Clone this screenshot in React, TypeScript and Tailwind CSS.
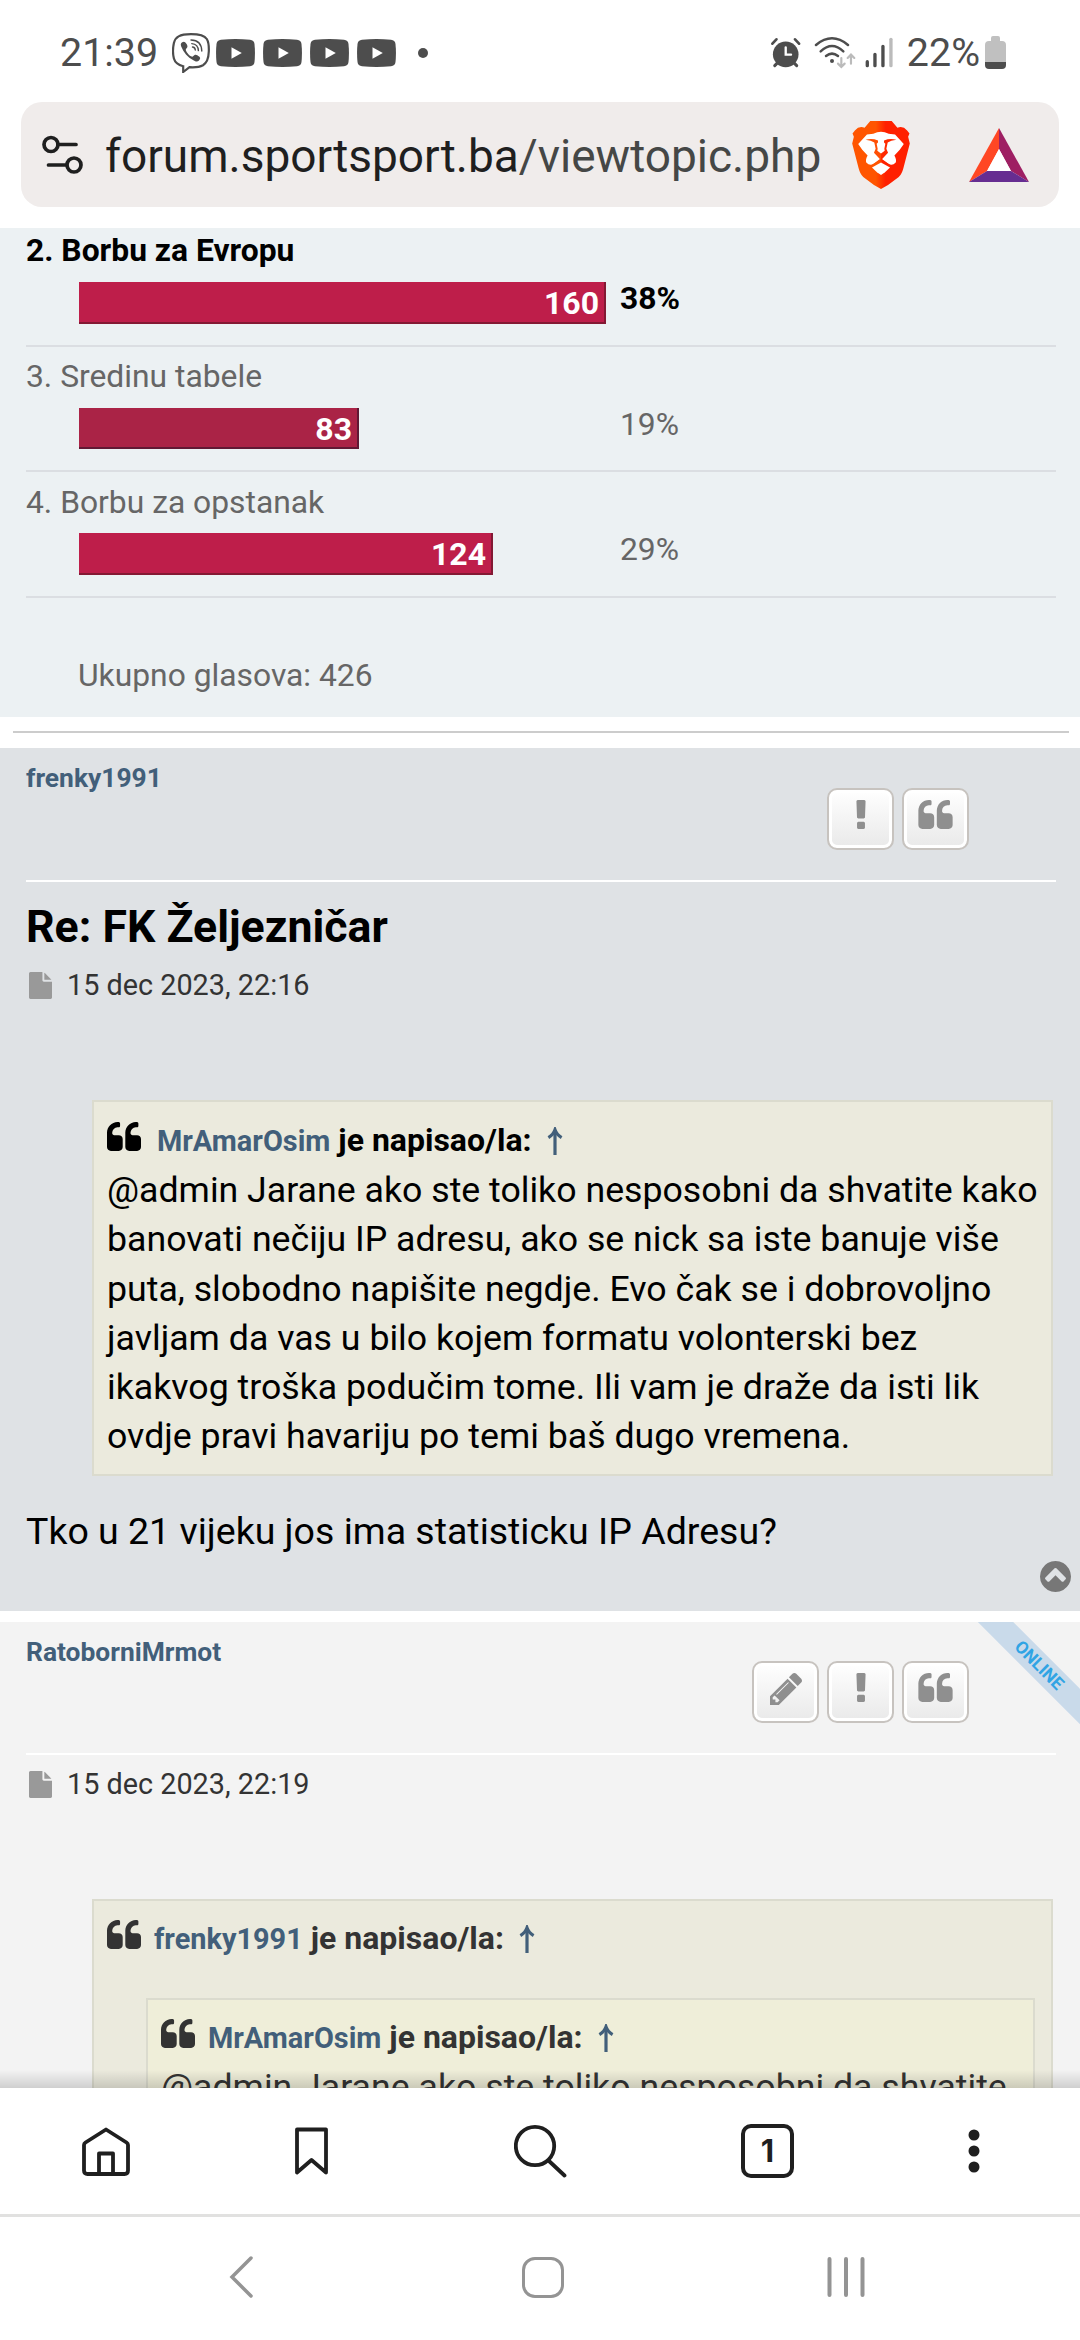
import React from "react";

type IconProps = { className?: string };

/* ---------- Font Awesome 4 glyphs used by the forum theme ---------- */

const QuoteIcon = ({ className }: IconProps) => (
  <svg viewBox="0 128 1664 1408" className={className} fill="currentColor">
    <path d="M768 960v384q0 80-56 136t-136 56h-384q-80 0-136-56t-56-136v-704q0-104 40.5-198.5t109.5-163.5 163.5-109.5 198.5-40.5h64q26 0 45 19t19 45v128q0 26-19 45t-45 19h-64q-106 0-181 75t-75 181v32q0 40 28 68t68 28h224q80 0 136 56t56 136zM1664 960v384q0 80-56 136t-136 56h-384q-80 0-136-56t-56-136v-704q0-104 40.5-198.5t109.5-163.5 163.5-109.5 198.5-40.5h64q26 0 45 19t19 45v128q0 26-19 45t-45 19h-64q-106 0-181 75t-75 181v32q0 40 28 68t68 28h224q80 0 136 56t56 136z" />
  </svg>
);

const ExclamationIcon = ({ className }: IconProps) => (
  <svg viewBox="673 128 446 1408" className={className} fill="currentColor">
    <path d="M1088 1248v224q0 26-19 45t-45 19h-256q-26 0-45-19t-19-45v-224q0-26 19-45t45-19h256q26 0 45 19t19 45zm30-1056l-28 768q-1 26-20.5 45t-45.500 19h-256q-26 0-45.500-19t-20.500-45l-28-768q-1-26 17.500-45t44.500-19h320q26 0 44.500 19t17.500 45z" />
  </svg>
);

const PencilIcon = ({ className }: IconProps) => (
  <svg viewBox="128 149 1515 1515" className={className} fill="currentColor">
    <path d="M491 1536l91-91-235-235-91 91v107h128v128h107zm523-928q0-22-22-22-10 0-17 7l-542 542q-7 7-7 17 0 22 22 22 10 0 17-7l542-542q7-7 7-17zm-54-192l416 416-832 832h-416v-416zm683 96q0 53-37 90l-166 166-416-416 166-165q36-38 90-38 53 0 91 38l235 234q37 39 37 91z" />
  </svg>
);

const FileIcon = ({ className }: IconProps) => (
  <svg viewBox="128 0 1536 1792" className={className} fill="currentColor">
    <path d="M1152 512v-472q22 14 36 28l408 408q14 14 28 36h-472zm-128 32q0 40 28 68t68 28h544v1056q0 40-28 68t-68 28h-1344q-40 0-68-28t-28-68v-1600q0-40 28-68t68-28h800v544z" />
  </svg>
);

const ChevronCircleUpIcon = ({ className }: IconProps) => (
  <svg viewBox="128 128 1536 1536" className={className} fill="currentColor">
    <path d="M1293 1139l102-102q19-19 19-45t-19-45l-454-454q-19-19-45-19t-45 19l-454 454q-19 19-19 45t19 45l102 102q19 19 45 19t45-19l307-307 307 307q19 19 45 19t45-19zm371-243q0 209-103 385.500t-279.500 279.500-385.500 103-385.500-103-279.500-279.500-103-385.500 103-385.500 279.500-279.500 385.500-103 385.500 103 279.500 279.500 103 385.500z" />
  </svg>
);

const ArrowUpIcon = ({ className }: IconProps) => (
  <svg viewBox="0 0 16 28" className={className} fill="none" stroke="currentColor">
    <path d="M8 3v25" strokeWidth="3.200" />
    <path d="M1.400 10.600C4.500 8.800 6.900 6 8 2.800 9.100 6 11.500 8.800 14.600 10.600" strokeWidth="3.200" />
  </svg>
);

/* ---------- Status bar ---------- */

const ViberIcon = () => (
  <svg viewBox="0 0 38 40" className="ml-[14px] h-[40px] w-[38px]" fill="none" stroke="#4d4d4d">
    <path
      d="M19 1.200C28 1.200 32.500 2.600 34.800 6 36.600 9 37 13.500 36.800 18.500 36.600 25 35.400 29.500 31 32.200 27.500 34.200 22 34.500 17.500 34.200L11.200 39V33.200C5.800 31.800 3 29.500 1.900 25.500 1 22 .9 14.500 1.900 10 3.200 4 7.500 1.200 19 1.200Z"
      strokeWidth="2.200"
    />
    <path
      d="M10.200 9.200C12 8 13.200 8.800 14.400 10.800 15.600 12.800 16 13.800 14.600 15.200 13.400 16.400 13.500 17.200 15 19.600 16.600 22 18 23 19.600 23.600 21 24 21.500 22.800 22.600 22 24 21.200 25.500 22.200 27.200 23.600 28.600 24.800 28.400 26 27 27.400 25.400 29 23.800 28.600 21.400 27.200 15.500 24 11.600 19.500 9.200 13.400 8.400 11.400 8.800 10.200 10.200 9.200Z"
      fill="#4d4d4d"
      stroke="none"
    />
    <path d="M19 7C25.500 7.200 29.600 11 29.800 18M19.800 10.600C24 11 26.200 13.600 26.400 17.600M20.500 14C22.400 14.200 23.200 15.200 23.300 17" strokeWidth="1.400" strokeLinecap="round" />
  </svg>
);

const YoutubeIcon = () => (
  <svg viewBox="0 0 39 28" className="h-[28px] w-[39px]">
    <path d="M5 .7Q19.500-.5 34 .7 38 1.200 38.500 5 39.400 14 38.500 23 38 26.800 34 27.300 19.500 28.500 5 27.300 1 26.800.5 23-.4 14 .5 5 1 1.200 5 .7Z" fill="#4d4d4d" />
    <path d="M15.500 8.200v11.600L25.800 14Z" fill="#fff" />
  </svg>
);

const StatusIcons = () => (
  <svg viewBox="30 24 366 100" className="h-[33.300px] w-[122px]" fill="none" strokeLinecap="round">
    <g stroke="#4d4d4d">
      <circle cx="74" cy="79" r="38.500" fill="#4d4d4d" stroke="none" />
      <path d="M34 47L46 34M114 47L102 34" strokeWidth="8" />
      <path d="M41 113L50 104M107 113L98 104" strokeWidth="9" />
      <path d="M74 58V80H90" stroke="#fff" strokeWidth="7" />
      <path d="M165 51Q213 11 261 51" strokeWidth="7.500" />
      <path d="M179 70Q213 38 247 70" strokeWidth="7.500" />
      <path d="M195 84Q213 70 231 84" strokeWidth="7.500" />
      <circle cx="213" cy="99" r="6" fill="#4d4d4d" stroke="none" />
      <path d="M319 101V113M342 79V113M366 55V113" strokeWidth="10" />
    </g>
    <g stroke="#bbbbbb">
      <path d="M390 34V113" strokeWidth="10" />
      <path d="M241 90V115M231 107L241 117 251 107M270 107V82M260 90L270 80 280 90" strokeWidth="6.500" />
    </g>
  </svg>
);

const Battery = () => (
  <svg viewBox="0 0 21 33" className="ml-[5px] h-[33px] w-[21px]">
    <path d="M6 2Q6 0 8 0H13Q15 0 15 2V5H17Q21 5 21 9V26H0V9Q0 5 4 5H6Z" fill="#c0c0c0" />
    <path d="M0 26H21V29Q21 33 17 33H4Q0 33 0 29Z" fill="#4d4d4d" />
  </svg>
);

const StatusBar = () => (
  <div className="flex h-[102px] items-center pt-[3px] pr-[74px] pl-[60px] text-[39.400px] text-[#4d4d4d]">
    <span>21:39</span>
    <ViberIcon />
    <div className="ml-[6px] flex gap-[8px]">
      <YoutubeIcon />
      <YoutubeIcon />
      <YoutubeIcon />
      <YoutubeIcon />
    </div>
    <span className="ml-[22px] size-[10px] rounded-full bg-[#4d4d4d]" />
    <div className="ml-auto flex items-center">
      <StatusIcons />
      <span className="ml-[14px]">22%</span>
      <Battery />
    </div>
  </div>
);

/* ---------- Address bar ---------- */

const TuneIcon = () => (
  <svg viewBox="0 0 41 40" className="h-[40px] w-[41px]" fill="none" stroke="#1f1f1f" strokeWidth="3.700" strokeLinecap="round">
    <circle cx="9" cy="9.500" r="7" />
    <path d="M16 9.500H34M6.500 30H24" />
    <circle cx="32" cy="30" r="7" />
  </svg>
);

const BraveIcon = () => (
  <svg viewBox="33 33 172 203" className="h-[68px] w-[58px]">
    <defs>
      <linearGradient id="mane" x1="0" x2="1" y1="0" y2="0">
        <stop offset="0" stopColor="#ff5500" />
        <stop offset=".41" stopColor="#ff5500" />
        <stop offset=".58" stopColor="#ff2000" />
        <stop offset="1" stopColor="#ff2000" />
      </linearGradient>
    </defs>
    <path
      d="M87 33H151L168 53Q184 46 197 61L204 70 200 80 205 100 186 173Q181 192 172 200L140 224 119 236 98 224 66 200Q57 192 52 173L33 100 38 80 34 70 41 61Q54 46 70 53Z"
      fill="url(#mane)"
    />
    <path
      d="M77 73L96 71Q108 65 119 65 130 65 142 71L161 73 187 102 175 119 159 136Q166 148 163 157 152 169 140 160L119 144 98 160Q86 169 75 157 72 148 79 136L63 119 51 102Z"
      fill="#fff"
    />
    <path d="M119 147L147 164V173H91V164Z" fill="url(#mane)" />
    <path d="M119 157L146 172 131 186 119 194 107 186 92 172Z" fill="#fff" />
    <g fill="#ff4010">
      <path d="M73 89Q92 84 110 91L110 97 106 101 109 116 108 122 119 130V150L98 128 103 116 99 97 88 92Z" fill="#ff4f05" />
      <path d="M165 89Q146 84 128 91L128 97 132 101 129 116 130 122 119 130V150L140 128 135 116 139 97 150 92Z" fill="#ff2a00" />
    </g>
  </svg>
);

const BatIcon = () => (
  <svg viewBox="0 0 60 54" className="h-[54px] w-[60px]">
    <path d="M30 0L0 54 18 43 30 21Z" fill="#ff4724" />
    <path d="M30 0L60 54 42 43 30 21Z" fill="#9e1f63" />
    <path d="M0 54H60L42 43H18Z" fill="#662d91" />
    <path d="M30 21L42 43H18Z" fill="#fff" />
  </svg>
);

const AddressBar = () => (
  <div className="mx-[21px] flex h-[105px] items-center rounded-[21px] bg-[#f0eceb] pr-[30px] pl-[21px]">
    <TuneIcon />
    <span className="ml-[22px] pt-[3px] text-[46px] leading-[56px] text-[#454746]">
      <span className="text-[#1f1f1f]">forum.sportsport.ba</span>/viewtopic.php
    </span>
    <div className="ml-auto flex items-center gap-[59px]">
      <BraveIcon />
      <BatIcon />
    </div>
  </div>
);

/* ---------- Poll ---------- */

const POLL = [
  { label: "2. Borbu za Evropu", votes: 160, percent: "38%", row: "font-bold text-black", gap: "mt-[10px]", bar: "w-[527px] h-[42px] bg-[#be1e4a] border-[#831933]" },
  { label: "3. Sredinu tabele", votes: 83, percent: "19%", row: "pt-[7px] text-[#666666]", gap: "mt-[10px]", bar: "w-[280px] h-[41px] bg-[#aa2346] border-[#611834]" },
  { label: "4. Borbu za opstanak", votes: 124, percent: "29%", row: "pt-[8px] text-[#666666]", gap: "mt-[9px]", bar: "w-[414px] h-[42px] bg-[#be1e4a] border-[#831933]" },
];

const Poll = () => (
  <section className="h-[489px] bg-[#ecf1f3] pr-[24px] pl-[26px] text-[31.800px] text-[#666666]">
    {POLL.map((o) => (
      <div key={o.votes} className={`border-b-2 border-[#dbdee2] pb-[21px] ${o.row}`}>
        <div className="leading-[44px]">{o.label}</div>
        <div className={`flex items-start pl-[53px] ${o.gap}`}>
          <div className="w-[541px]">
            <div className={`border-r-2 border-b-2 pr-[5px] text-right text-[32px] leading-[42px] font-bold text-white ${o.bar}`}>{o.votes}</div>
          </div>
          <span className="leading-[32px]">{o.percent}</span>
        </div>
      </div>
    ))}
    <div className="mt-[55px] pl-[52px] leading-[44px]">Ukupno glasova: 426</div>
  </section>
);

/* ---------- Posts ---------- */

const PostButton = ({ children }: { children: React.ReactNode }) => (
  <button className="flex h-[62px] w-[67px] justify-center rounded-[10px] border-2 border-[#c7c3bf] bg-gradient-to-b from-white to-[#e9e9e9] pt-[10px] text-[#8f8f8f] shadow-[inset_0_0_0_3px_#ffffff]">
    {children}
  </button>
);

const PostHeader = ({ name, editable, height }: { name: string; editable?: boolean; height: string }) => (
  <header className={`mr-[24px] ml-[26px] flex items-end justify-between border-b-2 border-white pr-[87px] pb-[30px] ${height}`}>
    <span className="self-start pt-[12px] text-[26.400px] leading-[36px] font-bold text-[#425f7a]">{name}</span>
    <div className="flex gap-[8px]">
      {editable && (
        <PostButton>
          <PencilIcon className="size-[32px]" />
        </PostButton>
      )}
      <PostButton>
        <ExclamationIcon className="h-[29px] w-[10px]" />
      </PostButton>
      <PostButton>
        <QuoteIcon className="h-[29px] w-[35px]" />
      </PostButton>
    </div>
  </header>
);

const PostDate = ({ children }: { children: React.ReactNode }) => (
  <div className="flex items-center gap-[15px] pl-[29px] text-[28.800px] leading-[36px] text-[#333333]">
    <FileIcon className="h-[27px] w-[23px] text-[#999999]" />
    <span>{children}</span>
  </div>
);

const Cite = ({ name, gap }: { name: string; gap: string }) => (
  <div className="flex h-[51px] items-center leading-[51px] font-bold">
    <QuoteIcon className={`mb-[8px] h-[29px] w-[34px] ${gap}`} />
    <div className="flex items-baseline gap-[8px]">
      <span className="text-[28.900px] text-[#425f7a]">{name}</span>
      <span className="text-[32px]">je napisao/la:</span>
    </div>
    <ArrowUpIcon className="ml-[15px] h-[28px] w-[16px] text-[#425f7a]" />
  </div>
);

const QUOTE_LINES = [
  "@admin Jarane ako ste toliko nesposobni da shvatite kako",
  "banovati nečiju IP adresu, ako se nick sa iste banuje više",
  "puta, slobodno napišite negdje. Evo čak se i dobrovoljno",
  "javljam da vas u bilo kojem formatu volonterski bez",
  "ikakvog troška podučim tome. Ili vam je draže da isti lik",
  "ovdje pravi havariju po temi baš dugo vremena.",
];

const FirstPost = () => (
  <article className="h-[863px] bg-[#dfe2e5] text-black">
    <PostHeader name="frenky1991" height="h-[134px]" />
    <h3 className="mt-[18px] pl-[26px] text-[44.670px] leading-[54px] font-bold">Re: FK Željezničar</h3>
    <div className="mt-[13px]">
      <PostDate>15 dec 2023, 22:16</PostDate>
    </div>
    <blockquote className="mt-[97px] mr-[27px] ml-[92px] border-2 border-[#dbdbce] bg-[#ebeadd] px-[13px] pt-[13px] pb-[12px]">
      <Cite name="MrAmarOsim" gap="mr-[16px]" />
      <div className="text-[35.700px] leading-[49.300px]">
        {QUOTE_LINES.map((line) => (
          <div key={line}>{line}</div>
        ))}
      </div>
    </blockquote>
    <p className="mt-[29px] pl-[26px] text-[37.500px] leading-[52px]">Tko u 21 vijeku jos ima statisticku IP Adresu?</p>
    <div className="mt-[4px] flex justify-end pr-[9px]">
      <ChevronCircleUpIcon className="size-[31px] text-[#777777]" />
    </div>
  </article>
);

const OnlineRibbon = () => (
  <div className="absolute top-0 right-0 size-[103px] overflow-hidden">
    <div className="absolute top-[31.400px] -left-[38px] w-[200px] rotate-45 bg-[#c9daea] text-center text-[17.500px] leading-[25px] font-bold text-[#30a4e4]">
      ONLINE
    </div>
  </div>
);

const SecondPost = () => (
  <article className="relative mt-[11px] bg-[#f3f3f3] text-[#333333]">
    <PostHeader name="RatoborniMrmot" height="h-[133px]" editable />
    <div className="mt-[11px]">
      <PostDate>15 dec 2023, 22:19</PostDate>
    </div>
    <blockquote className="mt-[97px] mr-[27px] ml-[92px] border-2 border-[#dbdbce] bg-[#ebeadd] px-[13px] pt-[12px] pb-[13px]">
      <Cite name="frenky1991" gap="mr-[13px]" />
      <blockquote className="mt-[34px] mr-[3px] ml-[39px] border-2 border-[#dbdbce] bg-[#efeed9] px-[13px] pt-[12px] pb-[13px]">
        <Cite name="MrAmarOsim" gap="mr-[13px]" />
        <div className="text-[35.700px] leading-[49.300px]">@admin Jarane ako ste toliko nesposobni da shvatite</div>
      </blockquote>
    </blockquote>
    <OnlineRibbon />
  </article>
);

/* ---------- Browser toolbar and system navigation ---------- */

const Toolbar = () => (
  <nav className="flex h-[129px] shrink-0 items-center border-b-[3px] border-[#e1e1e0] pl-[82px] text-[#1f1f1f]">
    <svg viewBox="0 0 48 49" className="h-[49px] w-[48px]" fill="none" stroke="currentColor" strokeWidth="3.800" strokeLinejoin="round">
      <path d="M24 2.500L44.500 15.500Q46 16.500 46 18V43.500Q46 47 42.500 47H5.500Q2 47 2 43.500V18Q2 16.500 3.500 15.500Z" />
      <path d="M17 47V26.500H31V47" />
    </svg>
    <svg viewBox="0 0 33 48" className="ml-[165px] h-[48px] w-[33px]" fill="none" stroke="currentColor" strokeWidth="3.800" strokeLinejoin="round">
      <path d="M2 2.500H31V45.500L16.500 33 2 45.500Z" />
    </svg>
    <svg viewBox="0 0 53 54" className="ml-[186px] h-[54px] w-[53px]" fill="none" stroke="currentColor" strokeWidth="3.800" strokeLinecap="round">
      <circle cx="21" cy="22" r="19.200" />
      <path d="M35 37L50.500 51.500" />
    </svg>
    <div className="ml-[174px] flex h-[54px] w-[53px] items-center justify-center rounded-[10px] border-[4px] border-[#1f1f1f] font-[Inter,sans-serif] text-[31px] font-bold">1</div>
    <svg viewBox="0 0 12 44" className="ml-[174px] h-[44px] w-[12px]" fill="currentColor">
      <circle cx="6" cy="6" r="5.500" />
      <circle cx="6" cy="22" r="5.500" />
      <circle cx="6" cy="38" r="5.500" />
    </svg>
  </nav>
);

const SystemNav = () => (
  <nav className="flex flex-1 items-center pb-[3px] pl-[229px]">
    <svg viewBox="0 0 24 42" className="h-[42px] w-[24px]" fill="none" stroke="#949494" strokeWidth="3.500" strokeLinecap="round" strokeLinejoin="miter">
      <path d="M22 2L3 21 22 40" />
    </svg>
    <div className="ml-[269px] h-[41px] w-[42px] rounded-[13px] border-[3.500px] border-[#949494]" />
    <svg viewBox="0 0 38 40" className="ml-[263px] h-[40px] w-[38px]" fill="none" stroke="#949494" strokeWidth="4" strokeLinecap="round">
      <path d="M2.500 2V38M19 2V38M35.500 2V38" />
    </svg>
  </nav>
);

export default function App() {
  return (
    <div className="flex h-[2340px] w-[1080px] flex-col overflow-hidden bg-white font-[Roboto,sans-serif] whitespace-nowrap">
      <StatusBar />
      <AddressBar />
      <main className="relative mt-[21px] h-[1860px] shrink-0 overflow-hidden">
        <Poll />
        <hr className="mt-[14px] mr-[11px] mb-[15px] ml-[13px] h-[2px] border-0 bg-[#cccccc]" />
        <FirstPost />
        <SecondPost />
        <div className="absolute inset-x-0 bottom-0 h-[18px] bg-gradient-to-b from-transparent to-black/15" />
      </main>
      <Toolbar />
      <SystemNav />
    </div>
  );
}
